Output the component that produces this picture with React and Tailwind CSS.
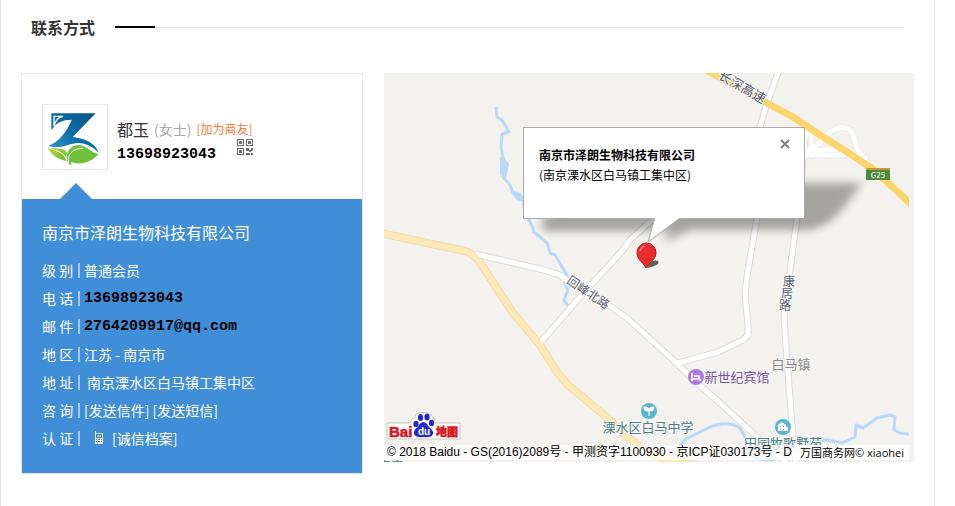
import React, { useState } from 'react';

const cjk = "font-['Open_Sans','Noto_Sans_CJK_SC',sans-serif]";
const hei = "font-['Noto_Sans_CJK_SC',sans-serif]";
const mono = "font-['Liberation_Mono',monospace] text-[15px] font-bold text-black";

function CompanyLogo() {
  return (
    <svg viewBox="20 20 192 192" className="w-16 h-16" role="img" aria-label="logo">
      <defs>
        <linearGradient id="z" x1="0" y1="1" x2="1" y2="0">
          <stop offset="0" stopColor="#3b9ad0" />
          <stop offset="0.45" stopColor="#0d70aa" />
          <stop offset="1" stopColor="#0a5288" />
        </linearGradient>
        <linearGradient id="leaf" x1="0" y1="0" x2="1" y2="1">
          <stop offset="0" stopColor="#c5d92f" />
          <stop offset="1" stopColor="#62b83a" />
        </linearGradient>
      </defs>
      <path
        d="M45 45H178L109 116C146 120 178 134 187 164C170 145 150 135 126 134C98 134 72 156 36 142C66 132 92 100 106 64C80 64 60 72 47 94L45 92Z"
        fill="url(#z)"
      />
      <path d="M53 84V54H80C65 56 57 66 53 84Z" fill="none" stroke="#fff" strokeWidth="4" />
      <path d="M34 147C58 155 84 144 93 166C88 174 86 179 90 188C68 184 42 170 34 147Z" fill="url(#leaf)" />
      <path d="M92 184C88 156 106 140 128 140C154 142 160 162 187 167C168 190 134 202 104 191L106 200C98 199 93 193 92 184Z" fill="#6fc139" />
      <path d="M97 194C92 168 108 150 140 150M40 150C64 160 82 160 90 184" fill="none" stroke="#fff" strokeWidth="3" />
    </svg>
  );
}

function QrIcon() {
  return (
    <svg viewBox="0 0 16 16" className="w-4 h-4" fill="#6b6b6b" shapeRendering="crispEdges">
      <path d="M0 0h7v7H0zM1 1v5h5V1zM9 0h7v7H9zM10 1v5h5V1zM0 9h7v7H0zM1 10v5h5v-5z" fillRule="evenodd" />
      <path d="M2 2h3v3H2zM11 2h3v3h-3zM2 11h3v3H2zM9 9h3v2h2V9h2v3h-2v1h-2v-1H9zM9 14h4v2H9zM14 14h2v2h-2z" />
    </svg>
  );
}

function PhoneIcon() {
  return (
    <svg viewBox="0 0 10 14" className="w-[10px] h-[14px] shrink-0">
      <path d="M1 0h1v2h7v11H1z" fill="#e4e6df" />
      <path d="M2 3h6v4H2z" fill="#477c9f" />
      <path d="M3 4h4v2H3z" fill="#8fd0e8" />
      <path d="M2 8h1v1H2zM4 8h2v1H4zM7 8h1v1H7zM2 10h1v1H2zM4 10h2v1H4zM7 10h1v1H7z" fill="#777" />
    </svg>
  );
}

const rows = [
  { label: '级 别', value: '普通会员' },
  { label: '电 话', value: <span className={mono}>13698923043</span> },
  { label: '邮 件', value: <span className={mono}>2764209917@qq.com</span> },
  { label: '地 区', value: '江苏 - 南京市' },
  { label: '地 址', value: <span className="pl-[3px]">南京溧水区白马镇工集中区</span> },
  {
    label: '咨 询',
    value: (
      <>
        <a href="#mail">[发送信件]</a> <a href="#sms">[发送短信]</a>
      </>
    )
  },
  {
    label: '认 证',
    value: (
      <span className="flex items-center gap-2 pl-[10px]">
        <PhoneIcon />
        <a href="#credit">[诚信档案]</a>
      </span>
    )
  }
];

function ContactCard() {
  return (
    <section className="w-[342px] shrink-0 border border-[#e5e5e5]">
      <div className="relative flex gap-[9px] px-5 pt-[30px] pb-[29px]">
        <div className="w-[66px] h-[66px] border border-[#e8e8e8]">
          <CompanyLogo />
        </div>
        <div className="pt-[15px]">
          <div className="flex items-center h-5 gap-[5px] whitespace-nowrap">
            <span className="text-base text-[#333]">都玉</span>
            <span className="text-sm text-[#aaa]">(女士)</span>
            <a href="#friend" className="text-xs text-[#f27b3a]">[加为商友]</a>
          </div>
          <div className="flex h-6 justify-between w-[136px]">
            <span className={`${mono} leading-4 self-end`}>13698923043</span>
            <QrIcon />
          </div>
        </div>
        <svg viewBox="0 0 32 16" className="absolute left-[38px] bottom-0 w-8 h-4" fill="#418ed8">
          <path d="M0 16L16 0L32 16z" />
        </svg>
      </div>
      <div className="bg-[#418ed8] text-white px-5 pt-[19px] pb-[21px]">
        <h3 className="text-base leading-7 mb-[10px]">南京市泽朗生物科技有限公司</h3>
        <dl className="text-sm">
          {rows.map((row) => (
            <div key={row.label} className="flex items-center h-7 whitespace-nowrap">
              <dt className="flex items-center">
                <span className="w-9">{row.label}</span>
                <span className="w-[2px] h-[15px] bg-[#a5c9ee] mr-1"></span>
              </dt>
              <dd>{row.value}</dd>
            </div>
          ))}
        </dl>
      </div>
    </section>
  );
}

const whiteRoads = [
  'M475 254L540 269L560 275L568 281L610 306L627 318L670 357L697 383L720 403L757 437L790 466',
  'M540 343L580 297L623 250L630 240L653 219L700 180',
  'M779 70L767 103L760 127L757 218L748 270L745 293L748 325L748 335L743 340L718 352L678 363',
  'M806 130L797 218L790 270L784 317L787 360L793 437L796 465'
];

const ramps = [
  'M797 121Q811 126 811 136V148L803 155H854Q863 156 872 168',
  'M806 154L816 146L830 132Q842 124 850 130Q854 134 855 142Q857 152 864 158L870 166',
  'M814 151L838 149'
];

const rivers = [
  'M496 107L497 117L502 120L509 132L502 134L501 148L503 157L506 164L502 168L503 177L510 185L513 193L523 200L525 212L533 228L534 232L547 243L550 253L555 255L567 275L564 282L568 290L564 300L569 307',
  'M680 447Q682 440 690 437L710 427Q727 420 740 428L745 437L748 450Q752 460 766 460Q784 460 793 447Q808 440 827 440L842 443L855 437L856 425L863 428L877 418L890 415L895 417L894 430L900 433L909 434'
];

const highway = 'M706 70L765 102L793 117L820 135L847 152L873 169L912 205';
const provincial = 'M380 233L465 251Q475 254 483 267L513 313L540 345L557 372L568 385L610 420L627 437L647 452L672 461L700 466';

function MapCanvas() {
  return (
    <svg
      viewBox="384 73 530 389"
      preserveAspectRatio="xMinYMin slice"
      className={`block w-full h-[389px] ${hei}`}
    >
      <defs>
        <filter id="soft" x="-20%" y="-50%" width="140%" height="200%">
          <feGaussianBlur stdDeviation="4" />
        </filter>
        <clipPath id="tiles">
          <path d="M384 73H909V462H384z" />
        </clipPath>
      </defs>
      <path d="M384 73H3000V3000H384z" fill="#f4f2ee" />
      <g clipPath="url(#tiles)" fill="none" strokeLinejoin="round">
        <g stroke="#b9d9fa" strokeWidth="3">
          {rivers.map((d) => <path key={d} d={d} />)}
          <path d="M501 158L508 164L505 178L501 174zM513 192L520 194L524 201L517 199z" fill="#b9d9fa" strokeWidth="2" />
        </g>
        <path d={provincial} stroke="#ecd8a6" strokeWidth="8" />
        {whiteRoads.map((d) => <path key={d} d={d} stroke="#dcdad8" strokeWidth="7" />)}
        {ramps.map((d) => <path key={d} d={d} stroke="#e2e0de" strokeWidth="6" />)}
        {whiteRoads.map((d) => <path key={d} d={d} stroke="#fff" strokeWidth="5" />)}
        {ramps.map((d) => <path key={d} d={d} stroke="#fff" strokeWidth="5" />)}
        <path d={provincial} stroke="#fde9b5" strokeWidth="6.5" />
        <path d={highway} stroke="#fdd56e" strokeWidth="7" />
      </g>
      <g textAnchor="middle" fontSize="13" stroke="#f8f6f2" strokeWidth="2" paintOrder="stroke">
        <text transform="translate(740 91) rotate(30)" fill="#525a6e">长深高速</text>
        <text transform="translate(586 296) rotate(34)" fontSize="12" fill="#5d6678">回峰北路</text>
        <g fontSize="12" fill="#5d6678">
          <text x="789" y="286">康</text>
          <text x="787" y="298">居</text>
          <text x="785" y="310">路</text>
        </g>
        <text x="791" y="369" fill="#8c8c8c">白马镇</text>
        <text x="737" y="382" fill="#7652a8">新世纪宾馆</text>
        <text x="648" y="432" fill="#4b8089">溧水区白马中学</text>
        <text x="783" y="448" fill="#4b8089">田园牧歌墅苑</text>
        <text x="391" y="471" fill="#4b8089">客家</text>
      </g>
      <path d="M866 168h24v12h-24z" fill="#4b8b3b" />
      <path d="M866 168h24v2h-24z" fill="#c79a36" />
      <text x="878" y="178" fontSize="8" fill="#fff" textAnchor="middle">G25</text>

      <circle cx="696" cy="377" r="8" fill="#a87ddd" />
      <path d="M692 373v8M692 379h8v2M694 376h5v3" stroke="#fff" strokeWidth="1.6" fill="none" />
      <circle cx="649" cy="411" r="8" fill="#58b7cc" />
      <path d="M649 416v-5M644 407q5 0 5 4q-5 0-5-4M654 407q-5 0-5 4q5 0 5-4" stroke="#fff" strokeWidth="1.2" fill="#fff" />
      <circle cx="783" cy="427" r="8" fill="#58b7cc" />
      <path d="M778 431v-6l4-3l4 3v2h2v4z" fill="#fff" />
      <path d="M780 426h1v1h-1zM783 426h1v1h-1zM780 429h1v1h-1zM783 429h1v1h-1z" fill="#58b7cc" />

      <path
        d="M590 183H862L848 202Q828 230 805 230H690L662 243L672 231H545L540 222z"
        fill="#000"
        opacity="0.32"
        filter="url(#soft)"
      />
      <path d="M647 267Q651 259 658 261Q661 265 647 268z" fill="#222" opacity="0.7" />
      <path d="M646 268C643 262 637 260 637 252.500A9.500 9.500 0 0 1 656 252.500C656 260 649 262 646 268z" fill="#ec2b2d" stroke="#b8191d" strokeWidth="1" />
      <path d="M640 251q1-4 5-5" stroke="#f98a8a" strokeWidth="1.500" fill="none" />
    </svg>
  );
}

function BaiduLogo() {
  return (
    <svg viewBox="0 0 78 30" className={`block w-[78px] h-[30px] ${hei}`} fontWeight="900">
      <path
        d="M2 11H26Q25 6 30 6Q30 0 36 1Q41 -1 44 2Q50 4 49 11H75V27H2z"
        fill="#fff"
        stroke="#c9c7c4"
        strokeWidth="1"
      />
      <text x="4" y="25" fontSize="15" fill="#d8191f" stroke="#d8191f" strokeWidth="0.6" fontFamily="Liberation Sans, sans-serif">Bai</text>
      <g fill="#2528d2">
        <ellipse cx="31" cy="12" rx="2.600" ry="3.200" />
        <ellipse cx="35.500" cy="5.500" rx="2.600" ry="3.500" />
        <ellipse cx="42" cy="5" rx="2.600" ry="3.500" />
        <ellipse cx="46.500" cy="11" rx="2.600" ry="3.200" />
        <path d="M39 10Q42 11 44 15Q49 19 48 22Q46 26 39 25Q31 26 29 22Q28 18 33 15Q35 10 39 10z" />
      </g>
      <text x="39" y="23" fontSize="10" fill="#fff" textAnchor="middle" fontFamily="Liberation Sans, sans-serif">du</text>
      <text x="51" y="24" fontSize="11" fill="#d8191f" stroke="#d8191f" strokeWidth="0.5">地图</text>
    </svg>
  );
}

function InfoWindow({ onClose }) {
  return (
    <div className="absolute left-[139px] top-[54px] w-[282px] h-[92px] bg-white border border-[#ababab] text-xs leading-5 text-black px-[15px] pt-[17px]">
      <p className="font-bold">南京市泽朗生物科技有限公司</p>
      <p>(南京溧水区白马镇工集中区)</p>
      <button onClick={onClose} aria-label="关闭" className="absolute right-[14px] top-[11px]">
        <svg viewBox="0 0 10 10" className="w-[10px] h-[10px]" stroke="#808080" strokeWidth="2">
          <path d="M1 1L9 9M9 1L1 9" />
        </svg>
      </button>
      <svg viewBox="0 0 34 26" className="absolute left-[123px] top-[89px] w-[34px] h-[26px]">
        <path d="M8 0L1 25L33 1V0z" fill="#fff" />
        <path d="M8 1L1 25L33 1" fill="none" stroke="#ababab" strokeWidth="1" />
      </svg>
    </div>
  );
}

function MapPanel() {
  const [open, setOpen] = useState(true);
  return (
    <section className="relative flex-1 min-w-0 h-[389px] overflow-hidden">
      <MapCanvas />
      {open && <InfoWindow onClose={() => setOpen(false)} />}
      <a href="#baidu" aria-label="百度地图" className="absolute left-px bottom-[20px]">
        <BaiduLogo />
      </a>
      <div className="absolute inset-x-0 bottom-[2px] mr-[5px] flex h-[15px] items-center whitespace-nowrap text-black">
        <span className="flex-1 min-w-0 overflow-hidden bg-white/70 pl-[3px] text-xs leading-[15px] font-['Liberation_Sans','Noto_Sans_CJK_SC',sans-serif]">
          © 2018 Baidu - GS(2016)2089号 - 甲测资字1100930 - 京ICP证030173号 - D
        </span>
        <span className={`bg-white px-[5px] text-[11px] leading-[15px] ${cjk}`}>万国商务网© xiaohei</span>
      </div>
    </section>
  );
}

export default function App() {
  return (
    <div className={`min-h-screen bg-white ${hei}`}>
      <main className="min-h-screen mr-5 border-x border-[#e5e5e5] pt-[15px]">
        <header className="flex items-center pl-[30px] pr-[30px] mb-[34px]">
          <h2 className="text-base leading-6 font-bold text-[#333] mr-5">联系方式</h2>
          <span className="w-10 h-[2px] bg-black"></span>
          <span className="flex-1 h-px bg-[#e5e5e5]"></span>
        </header>
        <div className="flex items-start gap-[21px] px-5">
          <ContactCard />
          <MapPanel />
        </div>
      </main>
    </div>
  );
}
